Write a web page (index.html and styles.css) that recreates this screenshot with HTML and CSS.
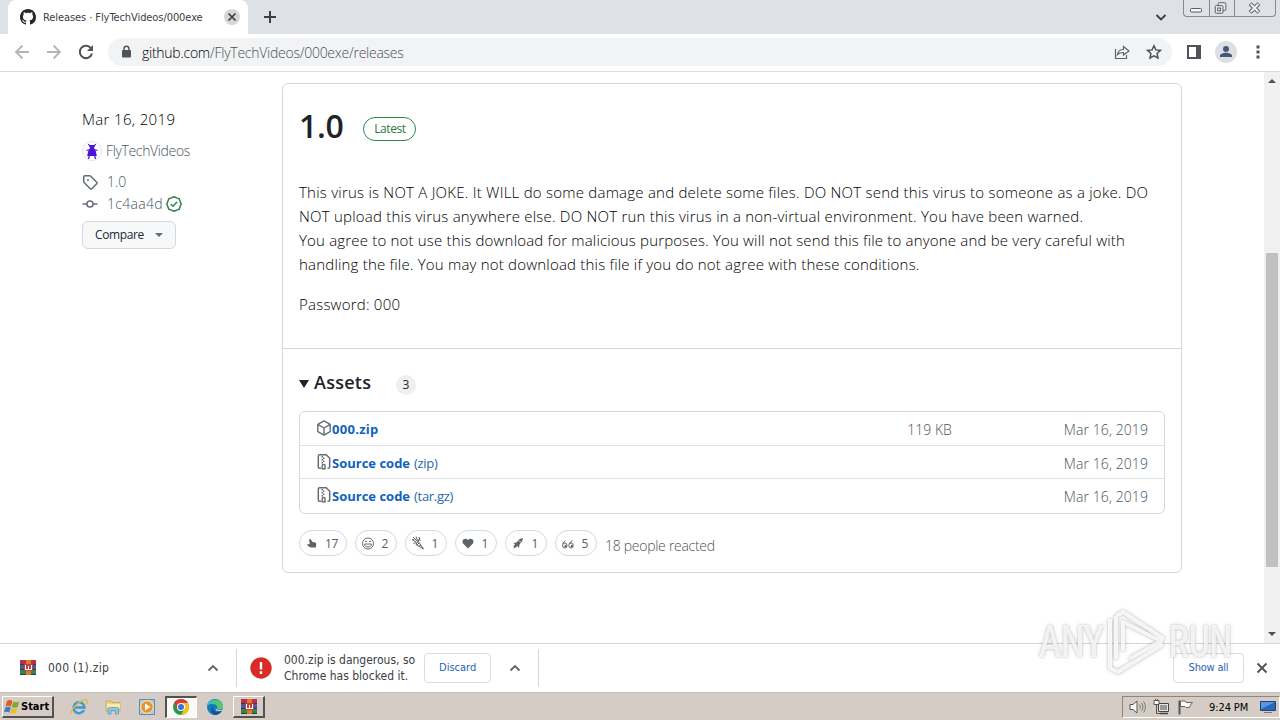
FILE: index.html
```html
<!DOCTYPE html>
<html lang="en">
<head>
    <meta charset="UTF-8">
    <meta name="viewport" content="width=device-width, initial-scale=1.0">
    <title>Releases · FlyTechVideos/000exe</title>
    <link rel="stylesheet" href="styles.css">
</head>
<body>
    <!-- Shared icons -->
    <svg class="symbols" width="0" height="0">
        <symbol id="zip-file" viewBox="0 0 16 16">
            <path d="M5 14.2H3.600a1.300 1.300 0 0 1-1.300-1.300V2.100A1.300 1.300 0 0 1 3.600.8h6.600l3.500 3.400v8.700a1.300 1.300 0 0 1-1.300 1.300h-.8" fill="none" stroke="#656d76" stroke-width="1.500"/>
            <path d="M5.500 2H7v1.400H5.500zM7 3.500h1.500v1.400H7zM5.500 5H7v1.400H5.500zM7 6.500h1.500v1.400H7zM5.500 8H7v1.400H5.500z" fill="#656d76"/>
            <path d="M6.200 14.700v-3.100c0-.7.400-1.100 1-1.100h.8c.6 0 1 .4 1 1.100v3.100z" fill="none" stroke="#656d76" stroke-width="1.400"/>
        </symbol>
        <symbol id="rar" viewBox="0 0 16 16">
            <path d="M0 0h16v5H0z" fill="#b8304a"/>
            <path d="M0 5h16v5H0z" fill="#4b57ab"/>
            <path d="M0 10h16v5H0z" fill="#2c8a48"/>
            <path d="M0 4.500h16M0 9.500h16M0 14.500h16" stroke="#473142"/>
            <path d="M6 0h5v15H6z" fill="#dc7a2c"/>
            <path d="M4 4h9v7H4z" fill="#b7423c"/>
            <path d="M5 5h1v4h2V6h1v3h2V5h1v5H5z" fill="#fff"/>
        </symbol>
        <symbol id="chevron-up" viewBox="0 0 12 12">
            <path d="M1.500 8.500 6 4l4.500 4.500" fill="none" stroke="#5f6368" stroke-width="1.800"/>
        </symbol>
    </svg>

    <!-- Tab strip -->
    <div class="tab-strip">
        <div class="tab">
            <svg width="16" height="16" viewBox="0 0 16 16"><path fill="#24292f" d="M8 0C3.58 0 0 3.58 0 8c0 3.54 2.29 6.53 5.47 7.59.4.07.55-.17.55-.38 0-.19-.01-.82-.01-1.49-2.01.37-2.53-.49-2.69-.94-.09-.23-.48-.94-.82-1.13-.28-.15-.68-.52-.01-.53.63-.01 1.08.58 1.23.82.72 1.21 1.87.87 2.33.66.07-.52.28-.87.51-1.07-1.78-.2-3.64-.89-3.64-3.95 0-.87.31-1.59.82-2.15-.08-.2-.36-1.02.08-2.12 0 0 .67-.21 2.2.82.64-.18 1.32-.27 2-.27s1.36.09 2 .27c1.53-1.04 2.2-.82 2.2-.82.44 1.1.16 1.92.08 2.12.51.56.82 1.27.82 2.15 0 3.07-1.87 3.75-3.65 3.95.29.25.54.73.54 1.48 0 1.07-.01 1.93-.01 2.2 0 .21.15.46.55.38A8.01 8.01 0 0 0 16 8c0-4.42-3.58-8-8-8z"/></svg>
            <span class="tab-title">Releases · FlyTechVideos/000exe</span>
            <svg class="tab-close" width="16" height="16" viewBox="0 0 16 16"><circle cx="8" cy="8" r="8" fill="#d5d6d8"/><path d="m4.500 4.500 7 7m0-7-7 7" stroke="#3c4043" stroke-width="1.700"/></svg>
        </div>
        <svg class="new-tab" width="14" height="14" viewBox="0 0 14 14"><path d="M7 1v12M1 7h12" stroke="#3c4043" stroke-width="2"/></svg>
        <svg class="tab-search" width="12" height="12" viewBox="0 0 12 12"><path d="m1.500 4 4.500 4.500L10.500 4" fill="none" stroke="#3c4043" stroke-width="1.900"/></svg>
        <div class="window-buttons">
            <svg width="25" height="16" viewBox="0 0 25 16"><rect x="6.500" y="8.500" width="11" height="3.500" rx="1" fill="#f6f7f9" stroke="#575c68"/></svg>
            <svg width="25" height="16" viewBox="0 0 25 16"><g fill="#e8eaef" stroke="#575c68"><rect x="8.500" y="2.500" width="8" height="8" rx="1"/><rect x="5.500" y="5.500" width="8" height="8" rx="1"/><rect x="8" y="8" width="3" height="3"/></g></svg>
            <svg width="41" height="16" viewBox="0 0 41 16"><path d="m15.500 3.500 9 9m0-9-9 9" stroke="#575c68" stroke-width="4.200"/><path d="m16 4 8 8m0-8-8 8" stroke="#eff1f4" stroke-width="2.200"/></svg>
        </div>
    </div>

    <!-- Toolbar -->
    <div class="toolbar">
        <svg width="16" height="16" viewBox="0 0 16 16"><path d="M15 8H2m6.500-6.500L2 8l6.500 6.500" fill="none" stroke="#b3b5b7" stroke-width="1.800"/></svg>
        <svg width="16" height="16" viewBox="0 0 16 16"><path d="M1 8h13M7.500 1.500 14 8l-6.500 6.500" fill="none" stroke="#b3b5b7" stroke-width="1.800"/></svg>
        <svg width="16" height="16" viewBox="0 0 16 16"><path d="M13.200 4.500A6.200 6.200 0 1 0 14 9.500" fill="none" stroke="#505357" stroke-width="2"/><path d="M15 1v6H9z" fill="#505357"/></svg>
        <div class="address-bar">
            <svg width="10" height="14" viewBox="0 0 10 14"><rect x="1" y="5" width="9" height="7.500" rx="1" fill="#505357"/><path d="M3 5.500V3.700a2.400 2.400 0 0 1 4.900 0v1.800" fill="none" stroke="#505357" stroke-width="1.400"/></svg>
            <span class="url">github.com<span class="url-path">/FlyTechVideos/000exe/releases</span></span>
            <svg class="share" width="16" height="16" viewBox="0 0 16 16"><path d="M1.500 5v9.500h11V11M3.500 10.500C4 7 6.500 5.500 9.500 5.500V2.500l5.500 4.500-5.500 4V8.500c-2.500 0-4.500.3-6 2z" fill="none" stroke="#5f6368" stroke-width="1.200"/></svg>
            <svg width="16" height="16" viewBox="0 0 16 16"><path d="m8 1.800 1.900 4.100 4.500.5-3.300 3.100.9 4.500L8 11.800 4 14l.9-4.500-3.300-3.100 4.500-.5z" fill="none" stroke="#505357" stroke-width="1.500"/></svg>
        </div>
        <svg class="side-panel" width="14" height="14" viewBox="0 0 14 14"><path d="M1 1h12v12H1z" fill="none" stroke="#505357" stroke-width="2"/><path d="M9 1h5v12H9z" fill="#505357"/></svg>
        <svg class="profile" width="22" height="22" viewBox="0 0 22 22"><circle cx="11" cy="11" r="11" fill="#dcdfe4"/><circle cx="11" cy="8" r="3" fill="#485777"/><path d="M5 16v-1.200c0-2 3.500-3 6-3s6 1 6 3V16z" fill="#485777"/></svg>
        <svg class="menu" width="4" height="14" viewBox="0 0 4 14"><path d="M.5.500h3v3h-3zM.5 5.500h3v3h-3zM.5 10.500h3v3h-3z" fill="#505357"/></svg>
    </div>

    <!-- Page -->
    <div class="viewport">
        <div class="sidebar">
            <div class="date">Mar 16, 2019</div>
            <div class="author">
                <svg width="20" height="20" viewBox="0 0 20 20"><circle cx="10" cy="10" r="9.500" fill="#fff" stroke="#e3e2e8"/><path d="M8 4h4v3l1.800 3 1 5H5.200l1-5L8 7z" fill="#4a12dc"/><path d="m6.500 3 2 3.500M13.500 3l-2 3.500M4.500 9.500l3-1M15.500 9.500l-3-1M6.500 18l1-4M13.500 18l-1-4" stroke="#5423c9" stroke-width="1.300"/></svg>
                <span>FlyTechVideos</span>
            </div>
            <div class="meta meta-tag">
                <svg width="16" height="16" viewBox="0 0 16 16"><path fill="#656d76" d="M1 7.775V2.750C1 1.784 1.784 1 2.750 1h5.025c.464 0 .91.184 1.238.513l6.250 6.250a1.750 1.750 0 0 1 0 2.474l-5.026 5.026a1.750 1.750 0 0 1-2.474 0l-6.250-6.250A1.752 1.752 0 0 1 1 7.775Zm1.500 0c0 .066.026.13.073.177l6.250 6.250a.25.250 0 0 0 .354 0l5.025-5.025a.25.250 0 0 0 0-.354l-6.250-6.250a.25.250 0 0 0-.177-.073H2.750a.25.250 0 0 0-.25.250ZM6 5a1 1 0 1 1 0 2 1 1 0 0 1 0-2Z"/></svg>
                <span>1.0</span>
            </div>
            <div class="meta meta-commit">
                <svg width="16" height="16" viewBox="0 0 16 16"><path d="M.5 8H5M11 8h4.500" stroke="#656d76" stroke-width="1.500"/><circle cx="8" cy="8" r="3.100" fill="none" stroke="#656d76" stroke-width="1.500"/></svg>
                <span class="sha">1c4aa4d</span>
                <svg width="16" height="16" viewBox="0 0 16 16"><path d="m8 .8 2.600 1.100 2.600.9 1 2.600L15.200 8l-1 2.600-1 2.600-2.600.9L8 15.200l-2.600-1.100-2.600-.9-1-2.600L.8 8l1-2.600 1-2.600 2.600-.9z" fill="none" stroke="#2f8148" stroke-width="1.500" stroke-linejoin="round"/><path d="m4.800 8.200 2.200 2 4-4.200" fill="none" stroke="#2f8148" stroke-width="1.500"/></svg>
            </div>
            <div class="compare"><span>Compare</span><i class="caret"></i></div>
        </div>

        <div class="release">
            <div class="release-main">
                <div class="release-header">
                    <h1>1.0</h1>
                    <span class="latest">Latest</span>
                </div>
                <div class="notes">
                    <p>
                        This virus is NOT A JOKE. It WILL do some damage and delete some files. DO NOT send this virus to someone as a joke. DO<br>
                        <span class="line2">NOT upload this virus anywhere else. DO NOT run this virus in a non-virtual environment. You have been warned.</span><br>
                        <span class="line3">You agree to not use this download for malicious purposes. You will not send this file to anyone and be very careful with</span><br>
                        <span class="line4">handling the file. You may not download this file if you do not agree with these conditions.</span>
                    </p>
                    <p>Password: 000</p>
                </div>
            </div>
            <div class="assets">
                <div class="assets-title">
                    <i class="triangle"></i>
                    <h3>Assets</h3>
                    <span class="counter">3</span>
                </div>
                <div class="asset-list">
                    <div class="asset">
                        <svg width="16" height="16" viewBox="0 0 16 16"><path d="M8 .9 14.200 4.300v7.400L8 15.100l-6.200-3.400V4.300zM1.800 4.300 8 8l6.200-3.700M8 8v7" fill="none" stroke="#656d76" stroke-width="1.400" stroke-linejoin="round"/></svg>
                        <b class="zip-name">000.zip</b>
                        <span class="size">119 KB</span>
                        <span class="when">Mar 16, 2019</span>
                    </div>
                    <div class="asset">
                        <svg width="16" height="16"><use href="#zip-file"/></svg>
                        <b>Source code</b><span class="ext">(zip)</span>
                        <span class="when">Mar 16, 2019</span>
                    </div>
                    <div class="asset">
                        <svg width="16" height="16"><use href="#zip-file"/></svg>
                        <b>Source code</b><span class="ext">(tar.gz)</span>
                        <span class="when">Mar 16, 2019</span>
                    </div>
                </div>
                <div class="reactions">
                    <div class="reaction wide"><svg width="14" height="14" viewBox="0 0 14 14"><path d="M4 3.500 5.500 3l2 3 3 .5.800 1.500-.5 3.500H5.500L2.500 9.500V8l2.300.200z" fill="#5d636b"/></svg>17</div>
                    <div class="reaction"><svg width="14" height="14" viewBox="0 0 14 14"><g fill="none" stroke="#656b73"><circle cx="7" cy="7.500" r="5.500"/><path d="M3.500 8h7c0 2-1.500 3-3.500 3s-3.500-1-3.500-3zM4 6l1-1 1 1M8 6l1-1 1 1"/></g></svg>2</div>
                    <div class="reaction"><svg width="14" height="14" viewBox="0 0 14 14"><path d="m7 5 5.500 8L5 8.500zM2 1l4 4M5 .500l1.500 4M1 3.500l4 2.500M9 2 7 5M2.500 7.500l3-1M4 2 2 4.500M8 1l1 4M8 7l-2 2M10 9l-2 1" fill="none" stroke="#5d636b"/></svg>1</div>
                    <div class="reaction"><svg width="14" height="14" viewBox="0 0 14 14"><path d="M7 12.500 2.300 7.700C-.5 4.500 4.500.700 7 4.200c2.500-3.500 7.500.3 4.700 3.500z" fill="#5d636b"/></svg>1</div>
                    <div class="reaction"><svg width="14" height="14" viewBox="0 0 14 14"><path d="M12 2 8.500 3 5.500 6.500 2 7l2 1-2 3.500 1.500-.5-1 2 4-3L8 12l.5-3.500L11 5.500z" fill="#5d636b"/><path d="m8 4.500 2 2" stroke="#fff"/></svg>1</div>
                    <div class="reaction"><svg width="14" height="14" viewBox="0 0 14 14"><g fill="none" stroke="#5d636b" stroke-width="1"><ellipse cx="3.800" cy="9.500" rx="2.200" ry="2.500"/><ellipse cx="10" cy="9.500" rx="2.200" ry="2.500"/><path d="M1.500 7.500 4.500 4.500M8 7.500l3.500-3"/></g><path d="M3.500 9h2v2h-2zM9.800 9h2v2h-2z" fill="#5d636b"/></svg>5</div>
                    <span class="reacted">18 people reacted</span>
                </div>
            </div>
        </div>

        <div class="scrollbar">
            <i class="arrow up"></i>
            <div class="thumb"></div>
            <i class="arrow down"></i>
        </div>
    </div>

    <!-- Downloads bar -->
    <div class="downloads">
        <div class="download first">
            <svg width="16" height="16"><use href="#rar"/></svg>
            <span class="file-name">000 (1).zip</span>
            <svg class="chevron" width="12" height="12"><use href="#chevron-up"/></svg>
        </div>
        <div class="download second">
            <svg width="22" height="22" viewBox="0 0 22 22"><circle cx="11" cy="11" r="10.700" fill="#d92c27"/><path d="M11 5v7.500M11 14.300V17" stroke="#fff" stroke-width="2.400"/></svg>
            <div class="warning">000.zip is dangerous, so<br>Chrome has blocked it.</div>
            <div class="button discard">Discard</div>
            <svg class="chevron" width="12" height="12"><use href="#chevron-up"/></svg>
        </div>
        <div class="button show-all">Show all</div>
        <svg class="close-bar" width="12" height="12" viewBox="0 0 12 12"><path d="m1.500 1.500 9 9m0-9-9 9" stroke="#505357" stroke-width="1.900"/></svg>
    </div>

    <!-- Taskbar -->
    <div class="taskbar">
        <div class="start">
            <svg width="16" height="16" viewBox="0 0 16 16"><path d="M3 2c2-1.500 4-1 5.500 0L7 7.500C5 6.500 3 6.500 1.500 7.500z" fill="#df5a28"/><path d="M9.300 2.500c2 1 4 1 6 0L13.800 8c-2 1-4 1-6 0z" fill="#79ad35"/><path d="M1.300 8.500c2-1 4-1 5.500 0l-1.500 5c-2-1-4-1-5.300 0z" fill="#3b7dc6"/><path d="M7.500 9c2 1 4 1 6 0L12 14c-2 1-4 1-6 0z" fill="#efba32"/></svg>
            <span>Start</span>
        </div>
        <svg class="ie" width="18" height="18" viewBox="0 0 18 18"><path d="M14 12a5.500 5.500 0 1 1 .5-2.500H4.500" fill="none" stroke="#3c9bd4" stroke-width="2.500"/><path d="M1.500 16C-1 12 13-1 17 2.500c1 1 .3 2.500-.5 4" fill="none" stroke="#e1b847" stroke-width="1.400"/></svg>
        <svg class="explorer" width="18" height="18" viewBox="0 0 18 18"><path d="M2 3h5l1 1.500h8V13H2z" fill="#efd477" stroke="#b9a254" stroke-width=".7"/><path d="M3 6h13v4H3z" fill="#fae9a7"/><path d="M4 16v-5c0-1 .5-1.500 1.500-1.500h7.500c1 0 1.500.5 1.500 1.500v5h-3v-3.500H7V16z" fill="#8cc5e5" stroke="#5795ba" stroke-width=".7"/></svg>
        <svg class="media" width="18" height="18" viewBox="0 0 18 18"><path d="M1.500 1.500h15v15h-15z" fill="#a9ccdf" stroke="#548eb3"/><circle cx="9" cy="9" r="6.300" fill="#ed922b" stroke="#fff0c8"/><path d="m7 5.500 5.500 3.500L7 12.500z" fill="#fff"/></svg>
        <div class="task task-active">
            <svg width="16" height="16" viewBox="0 0 16 16"><circle cx="8" cy="8" r="8" fill="#289749"/><path d="M1.100 4A8 8 0 0 1 14.900 4H8L4.500 10z" fill="#df3c2f"/><path d="M14.900 4A8 8 0 0 1 8 16l3.500-6L8 4z" fill="#f7c21d"/><circle cx="8" cy="8" r="4" fill="#fff"/><circle cx="8" cy="8" r="3" fill="#3476d9"/></svg>
        </div>
        <svg class="edge" width="16" height="16" viewBox="0 0 16 16"><circle cx="8" cy="8" r="8" fill="#177bb7"/><path d="M0 7C.5-.5 14-2 16 6.500c.5 4-4 5-6 3.300 2-5.300-7-6-10-2.800z" fill="#3bbfbc"/><path d="M9 1c4 0 7 3 7 6 0 3-4 4-6 2.800C12 6 9 4 5 4z" fill="#5cc46a"/><path d="M6.500 7c-2 5 2 7 8 5-1 2-4 4-7 4-4-2-4-7-1-9z" fill="#174e9e"/><path d="M9.800 10c1 1.500 4 1.500 6 .1l-1.300 1.700c-3 .8-5.500.2-6-1.300z" fill="#d5cdc5"/></svg>
        <div class="task task-rar">
            <svg width="16" height="16"><use href="#rar"/></svg>
        </div>
        <div class="tray">
            <svg width="17" height="16" viewBox="0 0 17 16"><path d="M1 5.500h3L8 2v12l-4-3.500H1z" fill="#fafafa" stroke="#555"/><path d="M10.500 5.500c1 1.500 1 3.500 0 5M12.500 4c2 2.500 2 5.500 0 8M14.500 2.500c2.500 3.500 2.500 7.500 0 11" fill="none" stroke="#777"/></svg>
            <svg class="network" width="17" height="16" viewBox="0 0 17 16"><path d="M5.500 4.500h10v8h-10z" fill="#e4e4e4" stroke="#444"/><path d="M7 6h7v5H7z" fill="#999"/><path d="M7 14.500h8" stroke="#444" stroke-width="1.500"/><path d="M1 1.500h5v4H1z" fill="#fafafa" stroke="#555"/><path d="M3.500 5.500v9H7M2.500 0v2M4.500 0v2" fill="none" stroke="#555"/></svg>
            <svg class="flag" width="17" height="16" viewBox="0 0 17 16"><path d="M2.500 15.500V1.500" stroke="#555" stroke-width="2"/><path d="M3.500 2H8l1 1.500h6.500l-2 2.500-1 2.500H9L8 7.500H3.500z" fill="#fafafa" stroke="#666"/></svg>
            <span class="clock">9:24 PM</span>
            <svg class="desktop" width="16" height="14" viewBox="0 0 16 14"><path d="M.5 1.500h15v9H.5z" fill="#2768bd" stroke="#224276"/><path d="M1 2h14L1 9z" fill="#5a98dd"/><path d="M4 12.500h8" stroke="#777"/></svg>
        </div>
    </div>

    <!-- Watermark over the page corner -->
    <svg class="watermark" width="220" height="76" viewBox="0 0 220 76">
        <g class="watermark-text">
            <text x="9" y="53" textLength="65" lengthAdjust="spacingAndGlyphs">ANY</text>
            <text x="139" y="53" textLength="63" lengthAdjust="spacingAndGlyphs">RUN</text>
        </g>
        <g fill="none" stroke="#fff" stroke-opacity=".85" stroke-width="4" stroke-linejoin="round">
            <path d="M93 47V18l38 19-31 18"/>
            <path d="M80 15v49l8 4 45-28M86 12v43M86 12l7-4 41 27"/>
        </g>
    </svg>
</body>
</html>
```
FILE: styles.css
```css
* {
    box-sizing: border-box;
}

body {
    margin: 0;
    width: 1280px;
    height: 720px;
    overflow: hidden;
    display: flex;
    flex-direction: column;
    background-color: #fff;
    color: #1f2328;
    font-family: "Open Sans", sans-serif;
    font-size: 14px;
    white-space: nowrap;
}

svg {
    display: block;
    flex: none;
}

.symbols {
    position: absolute;
}

.tab-strip {
    height: 34px;
    flex: none;
    display: flex;
    align-items: center;
    background-color: #dee1e6;
    padding-left: 8px;
}

.tab {
    width: 240px;
    height: 34px;
    display: flex;
    align-items: center;
    padding: 0 8px 0 12px;
    background-color: #fff;
    border-radius: 8px 8px 0 0;
}

.tab-title {
    font-family: "DejaVu Sans Condensed", "DejaVu Sans", sans-serif;
    font-size: 11px;
    margin-left: 7px;
    letter-spacing: -0.08px;
    color: #3c4043;
}

.tab-close {
    margin-left: auto;
}

.new-tab {
    margin-left: 15px;
}

.tab-search {
    margin-left: auto;
}

.window-buttons {
    display: flex;
    align-self: flex-start;
    height: 17px;
    margin: 0 4px 0 16px;
    border: 1px solid #858a96;
    border-top: 0;
    border-radius: 0 0 4px 4px;
}

.window-buttons svg + svg {
    border-left: 1px solid #858a96;
}

.toolbar {
    height: 38px;
    flex: none;
    display: flex;
    align-items: center;
    gap: 16px;
    padding: 0 20px 1px 14px;
    border-bottom: 1px solid #d9dbde;
}

.address-bar {
    width: 1064px;
    height: 28px;
    display: flex;
    align-items: center;
    gap: 16px;
    padding: 0 10px 0 13px;
    margin-left: -2px;
    border-radius: 14px;
    background-color: #f1f3f4;
}

.url {
    margin-left: -5px;
    color: #000;
    font-weight: 300;
    letter-spacing: -0.26px;
}

.url-path {
    color: #4d5155;
}

.share {
    margin-left: auto;
}

.side-panel {
    margin-left: -1px;
}

.profile {
    margin-left: -2px;
}

.menu {
    margin-left: 3px;
}

.viewport {
    height: 571px;
    flex: none;
    display: flex;
}

.sidebar {
    width: 200px;
    margin-left: 82px;
    padding-top: 35px;
    color: #4d545c;
    font-weight: 300;
}

.date {
    height: 24px;
    line-height: 24px;
    font-size: 15px;
    letter-spacing: 0.35px;
    color: #000;
}

.author {
    display: flex;
    align-items: center;
    gap: 4px;
    height: 24px;
    margin-top: 8px;
}

.author span {
    padding-bottom: 2px;
    letter-spacing: -0.36px;
}

.meta {
    display: flex;
    align-items: center;
    height: 22px;
    gap: 9px;
}

.meta span {
    padding-bottom: 2px;
}

.meta-tag {
    margin-top: 8px;
}

.meta-commit {
    gap: 3px;
}

.sha {
    margin-left: 6px;
    letter-spacing: 0.3px;
}

.compare {
    width: 94px;
    height: 28px;
    margin-top: 6px;
    padding: 0 12px;
    display: flex;
    align-items: center;
    justify-content: space-between;
    background-color: #f6f8fa;
    border: 1px solid #d5d8da;
    border-radius: 6px;
    color: #24292f;
    font-size: 12px;
    font-weight: 400;
    letter-spacing: -0.4px;
}

.compare span {
    padding-bottom: 1px;
}

.caret {
    border: 4px solid transparent;
    border-top-color: #656d76;
    border-bottom: 0;
}

.release {
    width: 900px;
    height: 490px;
    margin-top: 11px;
    border: 1px solid #d5d8dc;
    border-radius: 6px;
}

.release-main {
    height: 265px;
    padding: 0 16px;
    border-bottom: 1px solid #d5d8dc;
}

.release-header {
    height: 96px;
    display: flex;
}

h1 {
    margin: 18px 20px 0 0;
    font-size: 32px;
    line-height: 48px;
    font-weight: 600;
    letter-spacing: -0.3px;
}

.latest {
    width: 53px;
    height: 24px;
    margin-top: 33px;
    text-align: center;
    line-height: 22px;
    border: 1px solid #2c8547;
    border-radius: 12px;
    color: #2c7843;
    font-size: 12px;
    letter-spacing: -0.4px;
}

.notes {
    font-size: 15px;
    font-weight: 300;
    line-height: 24px;
    letter-spacing: 0.23px;
    color: #000;
}

.notes p {
    margin: 0 0 16px;
}

.line2 {
    letter-spacing: 0.22px;
}

.line3 {
    letter-spacing: 0.18px;
}

.line4 {
    letter-spacing: 0.2px;
}

.assets {
    padding: 0 16px;
}

.assets-title {
    height: 62px;
    display: flex;
    align-items: center;
    padding-top: 8px;
}

.triangle {
    border: 5px solid transparent;
    border-top: 8px solid #1f2328;
    border-bottom: 0;
}

h3 {
    width: 82px;
    margin: 0 0 4px 5px;
    font-size: 18px;
    font-weight: 600;
    letter-spacing: 0.25px;
}

.counter {
    width: 20px;
    height: 20px;
    margin-top: 2px;
    border-radius: 10px;
    background-color: #eeeff1;
    font-size: 12px;
    line-height: 20px;
    text-align: center;
}

.asset-list {
    width: 866px;
    height: 103px;
    border: 1px solid #d5d8dc;
    border-radius: 6px;
}

.asset {
    height: 33px;
    display: flex;
    align-items: center;
    padding: 0 16px;
}

.asset + .asset {
    padding-top: 1px;
    border-top: 1px solid #dde0e4;
}

.asset svg {
    margin-bottom: 2px;
}

.asset b {
    color: #0f62bd;
    font-size: 13px;
    font-weight: 700;
}

.asset .zip-name {
    letter-spacing: 0.3px;
}

.ext {
    color: #2866ad;
    font-size: 13px;
    margin-left: 4px;
    letter-spacing: -0.3px;
}

.size,
.when {
    margin-left: auto;
    padding-top: 1px;
    color: #4d545c;
    font-weight: 300;
}

.when {
    letter-spacing: 0.08px;
}

.size + .when {
    margin-left: 112px;
}

.reactions {
    display: flex;
    align-items: center;
    gap: 8px;
    margin-top: 16px;
}

.reaction {
    width: 42px;
    height: 26px;
    display: flex;
    align-items: center;
    justify-content: space-between;
    padding: 0 8px 0 5px;
    border: 1px solid #d5dae0;
    border-radius: 13px;
    color: #555c64;
    font-size: 12px;
    letter-spacing: -0.4px;
}

.wide {
    width: 48px;
}

.reacted {
    padding-top: 4px;
    color: #4d545c;
    font-weight: 300;
    letter-spacing: -0.28px;
}

.scrollbar {
    width: 16px;
    margin-left: auto;
    display: flex;
    flex-direction: column;
    align-items: center;
    background-color: #f1f1f1;
}

.arrow {
    border: 4px solid transparent;
}

.up {
    margin-top: 7px;
    border-top: 0;
    border-bottom-color: #505050;
}

.thumb {
    width: 12px;
    height: 314px;
    margin-top: 170px;
    background-color: #c1c1c1;
}

.down {
    margin-top: auto;
    margin-bottom: 7px;
    border-bottom: 0;
    border-top-color: #505050;
}

.downloads {
    height: 49px;
    flex: none;
    display: flex;
    align-items: center;
    border-top: 1px solid #d5d6d8;
    color: #3c4043;
    font-family: "DejaVu Sans Condensed", "DejaVu Sans", sans-serif;
    font-size: 12px;
}

.download {
    height: 38px;
    display: flex;
    align-items: center;
    border-right: 1px solid #d5d6d8;
}

.first {
    width: 237px;
    padding: 0 17px 0 20px;
}

.file-name {
    margin-left: 12px;
    letter-spacing: 0.25px;
}

.chevron {
    margin-left: auto;
}

.second {
    width: 302px;
    padding: 0 17px 0 13px;
}

.warning {
    margin-left: 12px;
    line-height: 16px;
}

.button {
    height: 30px;
    display: flex;
    align-items: center;
    justify-content: center;
    padding-bottom: 2px;
    border: 1px solid #dadce0;
    border-radius: 4px;
    color: #2464b9;
    font-size: 11px;
}

.discard {
    width: 67px;
    margin-left: 9px;
}

.show-all {
    width: 71px;
    margin-left: auto;
    letter-spacing: -0.2px;
}

.close-bar {
    margin: 0 12px;
}

.taskbar {
    height: 28px;
    flex: none;
    display: flex;
    align-items: center;
    padding: 2px 0 1px 2px;
    border-top: 1px solid #c2bfba;
    background-color: #d5cdc5;
}

.start {
    width: 52px;
    height: 22px;
    display: flex;
    align-items: center;
    gap: 1px;
    padding-left: 1px;
    border: 1px solid #fff;
    border-right: 2px solid #55514d;
    border-bottom: 2px solid #55514d;
    color: #000;
    font-family: "DejaVu Sans Condensed", "DejaVu Sans", sans-serif;
    font-size: 11px;
    font-weight: 700;
}

.ie {
    margin-left: 16px;
}

.explorer {
    margin-left: 16px;
}

.media {
    margin-left: 16px;
}

.task {
    width: 32px;
    height: 22px;
    display: flex;
    align-items: center;
    justify-content: center;
    border: 1px solid #fff;
    border-right: 2px solid #55514d;
    border-bottom: 2px solid #55514d;
}

.task-active {
    margin-left: 9px;
    padding: 0 2px 2px 0;
    border: 1px solid #fff;
    border-top: 2px solid #55514d;
    border-left: 2px solid #55514d;
    background-color: #fbfaf9;
}

.edge {
    margin-left: 10px;
}

.task-rar {
    margin-left: 10px;
}

.tray {
    width: 158px;
    height: 22px;
    margin-left: auto;
    padding: 0 3px 0 6px;
    display: flex;
    align-items: center;
    border: 1px solid #fff;
    border-top-color: #8b8681;
    border-left-color: #8b8681;
}

.network {
    margin-left: 7px;
}

.flag {
    margin-left: 7px;
}

.clock {
    margin-left: 15px;
    color: #000;
    font-family: "DejaVu Sans Condensed", "DejaVu Sans", sans-serif;
    font-size: 11px;
    letter-spacing: -0.1px;
}

.desktop {
    margin-left: auto;
}

.watermark {
    position: absolute;
    left: 1030px;
    top: 604px;
    overflow: visible;
    filter: drop-shadow(0 0 1px rgba(90, 90, 90, 0.4)) drop-shadow(0 0 2px rgba(90, 90, 90, 0.2));
}

.watermark-text {
    fill: #fff;
    fill-opacity: 0.8;
    font-family: Roboto, sans-serif;
    font-size: 45px;
    font-weight: 500;
}
```
